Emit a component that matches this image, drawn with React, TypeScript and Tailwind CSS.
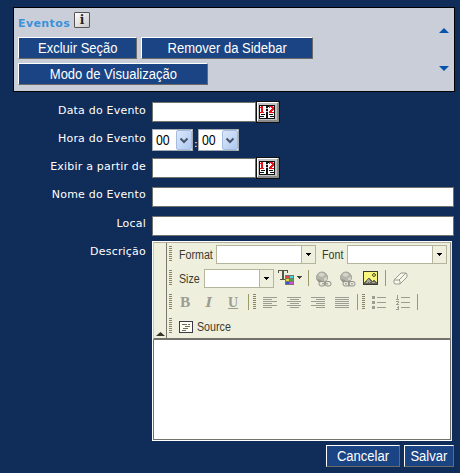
import type { ReactNode } from 'react';

function Button({ children, className }: { children: ReactNode; className: string }) {
  return (
    <button
      className={`flex h-[22px] shrink-0 items-center justify-center whitespace-nowrap border border-t-white border-l-white border-r-[#6b6a64] border-b-[#6b6a64] bg-[#1b4484] font-['Liberation_Sans',Arial,sans-serif] text-[14px] leading-none text-white ${className}`}
    >
      <span className="inline-block scale-x-[0.93]">{children}</span>
    </button>
  );
}

function Label({ children, className }: { children: ReactNode; className: string }) {
  return (
    <label
      className={`w-[146px] shrink-0 whitespace-nowrap text-right font-['DejaVu_Sans',Verdana,sans-serif] text-[11px] leading-[14px] tracking-[0.2px] text-white ${className}`}
    >
      {children}
    </label>
  );
}

function CalendarButton() {
  return (
    <button className="-mt-px h-[23px] w-6 shrink-0">
      <svg width="24" height="23" viewBox="0 0 24 23" shapeRendering="crispEdges">
        <rect width="24" height="22" fill="#111" />
        <rect x="1" y="1" width="22" height="20" fill="#8b8b8b" />
        <path d="M1 1H22V2H2V20H1Z" fill="#fff" />
        <rect x="2" y="2" width="19" height="17" fill="#c5c4c5" />
        <rect x="3" y="4" width="16" height="14" fill="#111" />
        <path d="M4 5h6v8H4zM12 5h6v8h-6zM4 13h6v4H4zM12 13h6v4h-6z" fill="#fff" />
        <path d="M5 5h2v6h1v1H4v-1h1V7H4V6h1z" fill="#f20d15" />
        <path d="M13 5h4v1h1v3h-1v1h-1v1h2v1h-5v-2h1V9h1V8h1V7h-1V6h-1v1h-1z" fill="#f20d15" />
        <path d="M9 5h1v1h1v1h1V6h1V5h-1V4h-2zM10 13h2v2h-2zM5 13h4v1H5zM13 13h4v1h-4zM4 15h4v1H4zM14 15h4v1h-4z" fill="#111" />
        <path d="M10 7h2v1h-2zM10 10h2v1h-2z" fill="#bbb" />
      </svg>
    </button>
  );
}

function HourSelect() {
  return (
    <div className="flex h-[22px] w-[41px] shrink-0 items-center border border-[#a3acb5] bg-white">
      <span className="w-[23px] pl-[3px] font-['Liberation_Sans',Arial,sans-serif] text-[14px] leading-none text-black"><span className="inline-block origin-left scale-x-[0.88]">00</span></span>
      <span className="flex h-[20px] w-4 items-center justify-center rounded-[2px] border border-[#a4bce0] bg-gradient-to-br from-[#dce8fc] to-[#aec8f0]">
        <svg width="10" height="7" viewBox="0 0 10 7"><path d="M1.5 1.5L5 5l3.5-3.5" fill="none" stroke="#485469" strokeWidth="2" /></svg>
      </span>
    </div>
  );
}

function Combo({ className }: { className: string }) {
  return (
    <div className={`flex h-[19px] shrink-0 border border-[#b5b59e] bg-white ${className}`}>
      <span className="flex-1" />
      <span className="flex w-[14px] items-center justify-center border-l border-[#b5b59e] bg-[#efefde]">
        <svg width="5" height="3" shapeRendering="crispEdges"><path d="M0 0h5v1H4v1H3v1H2V2H1V1H0z" fill="#000" /></svg>
      </span>
    </div>
  );
}

function Grip({ className }: { className: string }) {
  return (
    <svg className={`shrink-0 ${className}`} width="3" height="16" shapeRendering="crispEdges">
      {[0, 2, 4, 6, 8, 10, 12, 14].map((y) => (
        <rect key={y} y={y} width="3" height="1" fill="#8a8565" />
      ))}
    </svg>
  );
}

function Separator({ className }: { className: string }) {
  return <span className={`h-4 w-px shrink-0 bg-[#9c9a68] ${className}`} />;
}

function ToolText({ children, className }: { children: ReactNode; className: string }) {
  return (
    <span className={`shrink-0 whitespace-nowrap pt-[2px] font-['Liberation_Sans',Arial,sans-serif] text-[12px] leading-4 text-[#3a3a30] ${className}`}>
      <span className="inline-block origin-left scale-x-[0.89]">{children}</span>
    </span>
  );
}

function Lines({ rows, className }: { rows: number[][]; className: string }) {
  return (
    <svg className={`mt-[2px] shrink-0 ${className}`} width="15" height="12" shapeRendering="crispEdges">
      {rows.map(([x, w], i) => (
        <rect key={i} x={x} y={i * 2} width={w} height="1" fill="#9c9c90" />
      ))}
    </svg>
  );
}

function LinkIcon({ broken, className }: { broken?: boolean; className: string }) {
  return (
    <svg className={`mt-[2px] shrink-0 ${className}`} width="17" height="17" viewBox="0 0 17 17">
      <circle cx="7" cy="6.5" r="5.5" fill="#b5b5ab" stroke="#a0a096" />
      <path d="M3 4Q5 1 8 2L10 4 7 6 5 5zM9 7l3-1v3l-3 1z" fill="#d5d5ca" />
      <path d="M2 8l4 1 1 3-3-1z" fill="#96968c" />
      <rect x="4" y="10.5" width="6" height="4.5" rx="2" fill="#e9e9db" stroke="#919188" />
      <rect x="10" y="10.5" width="6" height="4.5" rx="2" fill="#e9e9db" stroke="#919188" />
      <path d={broken ? 'M10 9v7M6 12.8h2M12 12.8h2' : 'M7 12.8h6'} stroke="#919188" />
    </svg>
  );
}

function Editor() {
  return (
    <div className="ml-[6px] h-[200px] w-[300px] border border-white border-r-[#e7e7e2] bg-white">
      <div className="flex h-[98px] border-t border-l border-r border-b-2 border-t-[#b3aea0] border-l-[#c9c7bb] border-r-[#8e8e88] border-b-[#73736b] bg-[#efefde]">
        <div className="flex w-[13px] items-end justify-center border-r border-[#77776d] pb-[2px]">
          <svg width="9" height="4"><path d="M0 4L4.5 0 9 4z" fill="#35352c" /></svg>
        </div>
        <div className="-mt-px flex-1">
          <div className="flex h-6 items-center">
            <Grip className="ml-[2px]" />
            <ToolText className="ml-[7px] w-[37px]">Format</ToolText>
            <Combo className="w-[100px]" />
            <ToolText className="ml-[6px] w-[25px]">Font</ToolText>
            <Combo className="w-[100px]" />
          </div>
          <div className="flex h-6 items-center">
            <Grip className="ml-[2px]" />
            <ToolText className="ml-[7px] w-[25px]">Size</ToolText>
            <Combo className="w-[70px]" />
            <svg className="ml-1 shrink-0" width="25" height="16" shapeRendering="crispEdges">
              <path d="M0 0h10v3H9V1H6v8h2v1H2V9h2V1H1v2H0z" fill="#565648" />
              <rect x="7" y="5" width="9" height="10" fill="#77776d" />
              <path d="M8 6h3v2H8z" fill="#ef4444" /><path d="M12 6h3v2h-3z" fill="#39dddd" />
              <path d="M8 9h3v2H8z" fill="#e7d72a" /><path d="M12 9h3v2h-3z" fill="#4ca648" />
              <path d="M8 12h3v2H8z" fill="#3754cf" /><path d="M12 12h3v2h-3z" fill="#dc48df" />
              <path d="M19 6h5v1h-1v1h-1v1h-1V8h-1V7h-1z" fill="#464638" />
            </svg>
            <Separator className="ml-[5px]" />
            <LinkIcon className="ml-[6px]" />
            <LinkIcon broken className="ml-[7px]" />
            <svg className="mt-px ml-[7px] shrink-0" width="15" height="15" shapeRendering="crispEdges">
              <rect width="15" height="14" fill="#3b3b2e" />
              <rect x="1" y="1" width="13" height="12" fill="#f8f67c" />
              <path d="M1 13v-2h1v-1h1V9h1V8h1V7h2v1h1v1h1v1h1V9h2v1h1v1h1v2z" fill="#66665c" />
              <path d="M4 9h1V8h1v1h1v1h1v1H7v1H6v-1H5v1H3v-1h1zM9 11h3v1H9z" fill="#a9a99c" />
              <path d="M10 2h2v1h1v2h-1v1h-2V5H9V3h1z" fill="#65652f" />
              <path d="M10 3h2v2h-2z" fill="#b6b64e" />
            </svg>
            <Separator className="ml-[7px]" />
            <svg className="mt-px ml-[7px] shrink-0" width="15" height="13">
              <path d="M1 8L8 1h5l1 1v3l-7 7H2L1 11zM1 8h5l1 1v3M6 8l7-7" fill="#f7f7ea" stroke="#9b9b91" />
            </svg>
          </div>
          <div className="flex h-6 items-center font-['Liberation_Serif',serif] text-[14px] leading-4 text-[#9c9c90]">
            <Grip className="ml-[2px]" />
            <b className="ml-2 w-[26px] pt-px"><span className="inline-block origin-left scale-x-110">B</span></b>
            <b className="w-[22px] pt-px italic"><span className="inline-block scale-x-125">I</span></b>
            <b className="w-[10px] pt-px underline">U</b>
            <Separator className="ml-[10px]" />
            <Grip className="ml-[4px]" />
            <Lines className="ml-[7px]" rows={[[0, 14], [0, 9], [0, 14], [0, 9], [0, 14], [0, 9]]} />
            <Lines className="ml-[9px]" rows={[[0, 14], [3, 9], [0, 14], [3, 9], [0, 14], [3, 9]]} />
            <Lines className="ml-[9px]" rows={[[0, 14], [5, 9], [0, 14], [5, 9], [0, 14], [5, 9]]} />
            <Lines className="ml-[9px]" rows={[[0, 14], [0, 14], [0, 14], [0, 14], [0, 14], [0, 14]]} />
            <Separator className="ml-[7px]" />
            <Grip className="ml-[4px]" />
            <svg className="ml-[7px] shrink-0" width="15" height="15" shapeRendering="crispEdges">
              <path d="M0 1h3v3H0zM0 6h3v3H0zM0 11h3v3H0zM5 2h9v1H5zM5 7h9v1H5zM5 12h9v1H5z" fill="#9c9c90" />
            </svg>
            <svg className="ml-[9px] shrink-0" width="15" height="15" shapeRendering="crispEdges">
              <path d="M1 0h1v4h1v1H0V4h1V1H0zM0 6h3v2H2v1h1v1H0V9h1V8h1V7H0zM0 11h3v4H0v-1h2v-1H1v-1h1v-1H0zM5 2h9v1H5zM5 7h9v1H5zM5 12h9v1H5z" fill="#9c9c90" />
            </svg>
            <Separator className="ml-[6px]" />
          </div>
          <div className="flex h-6 items-center">
            <Grip className="ml-[2px]" />
            <svg className="mt-[2px] ml-[7px] shrink-0" width="14" height="12" shapeRendering="crispEdges">
              <rect width="14" height="12" fill="#39394a" />
              <rect x="1" y="1" width="12" height="10" fill="#fffff2" />
              <path d="M3 3h5v1H3zM6 5h5v1H6zM4 7h5v1H4zM3 9h4v1H3zM9 3h2v1H9z" fill="#6b6b62" />
            </svg>
            <ToolText className="ml-1">Source</ToolText>
          </div>
        </div>
      </div>
      <div className="h-[100px] border-x border-b border-[#73736b] bg-white" />
    </div>
  );
}

function DateRow({ label }: { label: string }) {
  return (
    <>
      <Label className="pt-[2px]">{label}</Label>
      <input className="ml-[6px] h-5 w-[104px] border border-[#73736e] bg-white" />
      <CalendarButton />
    </>
  );
}

export default function App() {
  return (
    <main className="h-[473px] w-[460px] overflow-hidden bg-[#102c59] pt-[7px]">
      <section className="ml-[13px] flex h-[85px] w-[442px] justify-between border border-black bg-[#c9ced9] pl-1">
        <div>
          <div className="flex h-[29px]">
            <h1 className="w-[56px] whitespace-nowrap pt-[9px] font-['DejaVu_Sans',Verdana,sans-serif] text-[11px] font-bold leading-[14px] tracking-[0.4px] text-[#3c91d9]">Eventos</h1>
            <span className="mt-1 flex h-4 w-4 items-center justify-center rounded-[1px] border border-[#555] bg-gradient-to-br from-white to-[#c7c7c7] font-['DejaVu_Serif',serif] text-[12px] font-bold leading-none text-[#222]">i</span>
          </div>
          <div className="flex gap-1">
            <Button className="w-[119px]">Excluir Seção</Button>
            <Button className="w-[172px]">Remover da Sidebar</Button>
          </div>
          <Button className="mt-1 w-[190px]">Modo de Visualização</Button>
        </div>
        <div className="flex w-[15px] flex-col pt-5">
          <svg width="10" height="5"><path d="M0 5L5 0l5 5z" fill="#0754aa" /></svg>
          <svg className="mt-[33px]" width="10" height="5"><path d="M0 0h10L5 5z" fill="#0754aa" /></svg>
        </div>
      </section>
      <form>
        <div className="mt-[10px] flex h-[27px]"><DateRow label="Data do Evento" /></div>
        <div className="flex h-[29px]">
          <Label className="pt-[3px]">Hora do Evento</Label>
          <div className="ml-[6px] flex">
            <HourSelect />
            <span className="w-[5px] pt-[8px] pl-px font-['DejaVu_Sans',sans-serif] text-[11px] leading-[14px] text-white">:</span>
            <HourSelect />
          </div>
        </div>
        <div className="flex h-[29px]"><DateRow label="Exibir a partir de" /></div>
        <div className="flex h-[29px]">
          <Label className="pt-[1px]">Nome do Evento</Label>
          <input className="ml-[6px] h-5 w-[302px] border border-[#73736e] bg-white" />
        </div>
        <div className="flex h-[25px]">
          <Label className="pt-[1px]">Local</Label>
          <input className="ml-[6px] h-5 w-[302px] border border-[#73736e] bg-white" />
        </div>
        <div className="flex"><Label className="pt-[4px]">Descrição</Label><Editor /></div>
        <div className="mt-1 mr-[6px] flex justify-end gap-1">
          <Button className="w-[74px]">Cancelar</Button>
          <Button className="w-[50px]">Salvar</Button>
        </div>
      </form>
    </main>
  );
}
